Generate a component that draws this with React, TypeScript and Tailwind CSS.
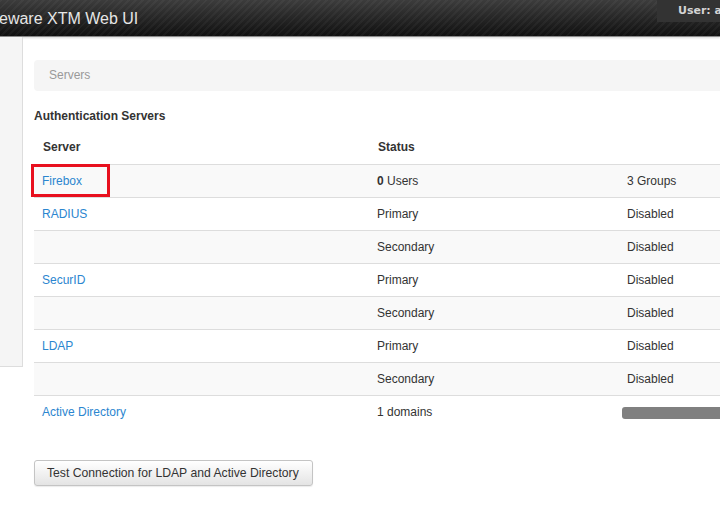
import React from "react";

const rows: { server: string; status: React.ReactNode; third: React.ReactNode }[] = [
  { server: "Firebox", status: (<><b>0</b> Users</>), third: "3 Groups" },
  { server: "RADIUS", status: "Primary", third: "Disabled" },
  { server: "", status: "Secondary", third: "Disabled" },
  { server: "SecurID", status: "Primary", third: "Disabled" },
  { server: "", status: "Secondary", third: "Disabled" },
  { server: "LDAP", status: "Primary", third: "Disabled" },
  { server: "", status: "Secondary", third: "Disabled" },
  { server: "Active Directory", status: "1 domains", third: (<span className="block h-[12px] w-[110px] ml-[-5px] rounded-l-[3px] bg-[#808080] mt-[1px]" />) },
];

export default function App() {
  return (
    <div className="w-[720px] h-[505px] overflow-hidden bg-white relative" style={{ fontFamily: '"Liberation Sans", Arial, sans-serif' }}>
      <div className="h-[37px] flex items-start justify-between bg-[repeating-linear-gradient(135deg,rgba(255,255,255,0.035)_0px,rgba(255,255,255,0.035)_2px,transparent_2px,transparent_5px),linear-gradient(#3c3c3c,#101010)] border-b border-[#8a8a8a] shadow-[0_1px_2px_rgba(0,0,0,0.15)]">
        <div className="text-[16px] leading-[16px] text-[#e6e6e6] pt-[11px] ml-[-1px] whitespace-nowrap">eware XTM Web UI</div>
        <div className="h-[22px] w-[63px] bg-[#333333] text-[#d4d4d4] text-[11px] font-bold leading-[22px] pl-[21px] whitespace-nowrap overflow-hidden" style={{ fontFamily: '"DejaVu Sans", Verdana, sans-serif' }}>User: a</div>
      </div>
      <div className="flex">
        <div className="w-[23px] h-[330px] shrink-0 bg-[#f5f5f5] border-r border-b border-[#dddddd]" />
        <div className="flex-1 pl-[11px] pt-[23px] min-w-0">
          <div className="h-[31px] bg-[#f5f5f5] rounded-l-[4px] pl-[15px] text-[12px] leading-[31px] text-[#999999]">Servers</div>
          <div className="mt-[17px] text-[12px] leading-[16px] font-bold text-[#333333]">Authentication Servers</div>
          <div className="mt-[6px] text-[12px] text-[#333333] relative">
            <div className="flex h-[34px] items-center font-bold">
              <div className="w-[335px] shrink-0 pl-[9px]">Server</div>
              <div className="w-[250px] shrink-0 pl-[9px]">Status</div>
              <div className="flex-1" />
            </div>
            {rows.map((r, i) => (
              <div key={i} className={`flex h-[33px] items-center border-t border-[#dddddd] ${i % 2 === 0 ? "bg-[#f9f9f9]" : "bg-white"}`}>
                <div className="w-[335px] shrink-0 pl-[8px] text-[#2b86cf]">{r.server}</div>
                <div className="w-[250px] shrink-0 pl-[8px]">{r.status}</div>
                <div className="flex-1 min-w-0 pl-[8px] whitespace-nowrap">{r.third}</div>
              </div>
            ))}
            <div className="absolute left-[-3px] top-[34px] w-[79px] h-[33px] border-[3px] border-[#e8101e]" />
          </div>
          <button className="mt-[32px] h-[26px] w-[279px] rounded-[3px] border border-[#c4c4c4] bg-[linear-gradient(#ffffff,#e4e4e4)] text-[12.2px] text-[#333333] text-left pl-[12px] shadow-[0_1px_1px_rgba(0,0,0,0.08)]">
            Test Connection for LDAP and Active Directory
          </button>
        </div>
      </div>
    </div>
  );
}
